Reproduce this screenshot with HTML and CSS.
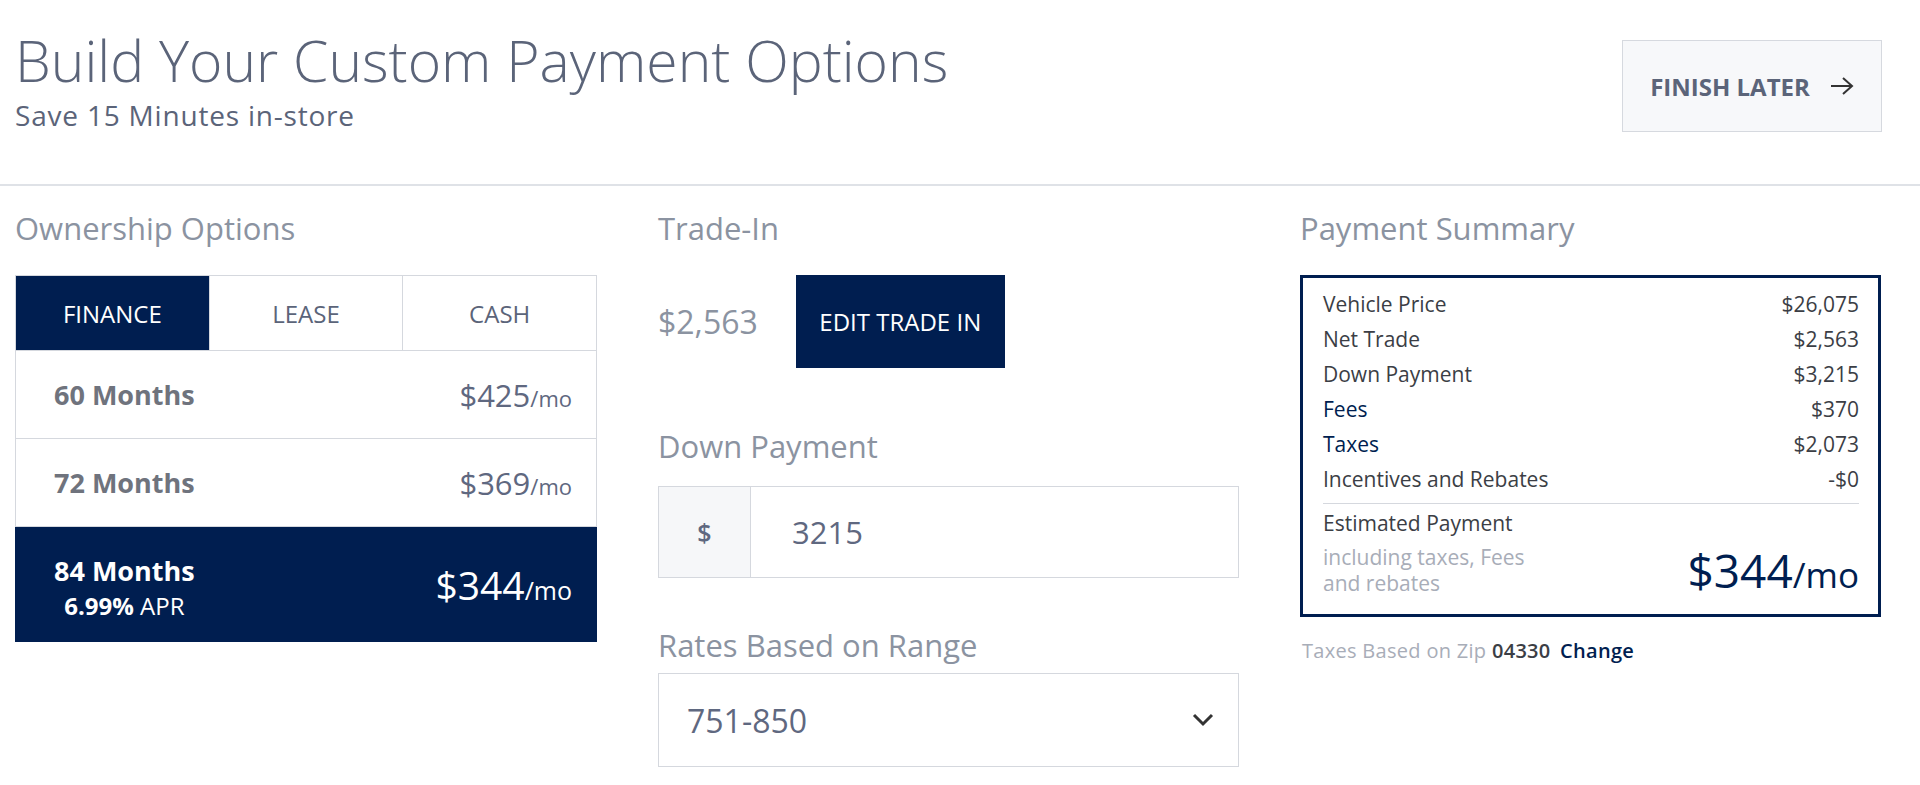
FILE: index.html
```html
<!DOCTYPE html>
<html lang="en">
<head>
<meta charset="utf-8">
<title>Build Your Custom Payment Options</title>
<link rel="stylesheet" href="styles.css">
</head>
<body>
<header class="header">
  <div class="header-text">
    <h1 class="title">Build Your Custom Payment Options</h1>
    <p class="subtitle">Save 15 Minutes in-store</p>
  </div>
  <button class="finish-btn">
    <span>FINISH LATER</span>
    <svg class="arrow" width="24" height="20" viewBox="0 0 24 20"><path d="M1 10 H22 M13 2 L22 10 L13 18" fill="none" stroke="#333" stroke-width="2"/></svg>
  </button>
</header>

<main class="main">
  <section class="col">
    <h2 class="heading">Ownership Options</h2>
    <div class="options">
      <div class="tabs">
        <div class="tab active">FINANCE</div>
        <div class="tab">LEASE</div>
        <div class="tab">CASH</div>
      </div>
      <div class="term">
        <span class="term-name">60 Months</span>
        <span class="term-price">$425<small>/mo</small></span>
      </div>
      <div class="term">
        <span class="term-name">72 Months</span>
        <span class="term-price">$369<small>/mo</small></span>
      </div>
      <div class="term selected">
        <span class="term-info">
          <span class="term-name">84 Months</span>
          <span class="apr"><b>6.99%</b> APR</span>
        </span>
        <span class="term-price">$344<small>/mo</small></span>
      </div>
    </div>
  </section>

  <section class="col">
    <h2 class="heading">Trade-In</h2>
    <div class="trade-row">
      <span class="trade-value">$2,563</span>
      <button class="edit-btn">EDIT TRADE IN</button>
    </div>
    <h2 class="heading down-heading">Down Payment</h2>
    <div class="field">
      <span class="prefix">$</span>
      <span class="field-value">3215</span>
    </div>
    <h2 class="heading rates-heading">Rates Based on Range</h2>
    <div class="select">
      <span class="select-value">751-850</span>
      <svg class="chevron" width="22" height="14" viewBox="0 0 22 14"><path d="M2 2 L11 11 L20 2" fill="none" stroke="#333" stroke-width="3"/></svg>
    </div>
  </section>

  <section class="col">
    <h2 class="heading">Payment Summary</h2>
    <div class="summary">
      <div class="line"><span>Vehicle Price</span><span>$26,075</span></div>
      <div class="line"><span>Net Trade</span><span>$2,563</span></div>
      <div class="line"><span>Down Payment</span><span>$3,215</span></div>
      <div class="line"><span class="link">Fees</span><span>$370</span></div>
      <div class="line"><span class="link">Taxes</span><span>$2,073</span></div>
      <div class="line"><span>Incentives and Rebates</span><span>-$0</span></div>
      <div class="divider"></div>
      <div class="est-label">Estimated Payment</div>
      <div class="est-row">
        <span class="est-note">including taxes, Fees<br>and rebates</span>
        <span class="est-price">$344<small>/mo</small></span>
      </div>
    </div>
    <p class="zip">Taxes Based on Zip <span class="zip-code">04330</span> <span class="zip-change">Change</span></p>
  </section>
</main>
</body>
</html>
```

FILE: styles.css
```css
* { box-sizing: border-box; }
body {
  margin: 0;
  font-family: "Open Sans", "Noto Sans", sans-serif;
  background: #fff;
  color: #5b6479;
}
.header {
  display: flex;
  justify-content: space-between;
  align-items: flex-start;
  height: 186px;
  padding: 0 38px 0 15px;
  border-bottom: 2px solid #dfe2e7;
}
.title {
  margin: 26px 0 0;
  font-size: 57px;
  line-height: 68px;
  font-weight: 300;
  color: #5b6479;
}
.subtitle {
  margin: 2px 0 0;
  font-size: 28px;
  line-height: 38px;
  letter-spacing: 0.8px;
  font-weight: 400;
  color: #5b6479;
}
.finish-btn {
  margin-top: 40px;
  width: 260px;
  height: 92px;
  display: flex;
  align-items: center;
  justify-content: center;
  gap: 20px;
  background: #f7f8fa;
  border: 1px solid #d6d9df;
  font-family: inherit;
  font-size: 24px;
  font-weight: 700;
  color: #5b6479;
  padding: 0;
}
.arrow { display: block; }

.main {
  display: grid;
  grid-template-columns: 582px 581px 581px;
  column-gap: 61px;
  padding: 22px 15px 0;
}
.heading {
  margin: 0;
  font-size: 31px;
  line-height: 40px;
  font-weight: 400;
  color: #8b93a1;
}

/* Ownership */
.options {
  margin-top: 27px;
  border: 1px solid #d5d8de;
}
.tabs {
  display: flex;
  height: 75px;
  border-bottom: 1px solid #d5d8de;
}
.tab {
  flex: 1;
  display: flex;
  align-items: center;
  justify-content: center;
  font-size: 24px;
  color: #5b6479;
  border-right: 1px solid #d5d8de;
}
.tab:last-child { border-right: none; }
.tab.active {
  background: #001e50;
  color: #fff;
}
.term {
  display: flex;
  justify-content: space-between;
  align-items: center;
  height: 88px;
  padding: 0 24px 0 38px;
  border-bottom: 1px solid #d5d8de;
}
.term-name {
  font-size: 27px;
  font-weight: 700;
  color: #6f737d;
}
.term-price {
  font-size: 31px;
  color: #5f6880;
}
.term-price small {
  font-size: 22px;
}
.term.selected {
  height: 115px;
  border-bottom: none;
  background: #001e50;
  margin: 0 -1px -1px;
  padding: 0 25px 0 39px;
}
.term.selected .term-name { color: #fff; line-height: 37px; }
.term-info {
  display: flex;
  flex-direction: column;
  align-items: center;
  margin-top: 4px;
}
.apr {
  font-size: 24px;
  line-height: 33px;
  color: #fff;
}
.term.selected .term-price {
  font-size: 39px;
  color: #fff;
}
.term.selected .term-price small { font-size: 25px; }

/* Trade in */
.trade-row {
  margin-top: 27px;
  display: flex;
  align-items: center;
  gap: 38px;
}
.trade-value {
  font-size: 32px;
  color: #8b93a1;
}
.edit-btn {
  width: 209px;
  height: 93px;
  border: none;
  background: #001e50;
  color: #fff;
  font-family: inherit;
  font-size: 24px;
  padding: 0;
}
.down-heading { margin-top: 58px; }
.field {
  margin-top: 20px;
  height: 92px;
  display: flex;
  border: 1px solid #d5d8de;
}
.prefix {
  width: 92px;
  display: flex;
  align-items: center;
  justify-content: center;
  background: #f6f7f9;
  border-right: 1px solid #d5d8de;
  font-size: 25px;
  font-weight: 600;
  color: #5f6880;
}
.field-value {
  display: flex;
  align-items: center;
  padding-left: 41px;
  font-size: 31px;
  color: #5f6880;
}
.rates-heading { margin-top: 47px; }
.select {
  margin-top: 8px;
  height: 94px;
  display: flex;
  align-items: center;
  justify-content: space-between;
  padding: 0 24px 0 28px;
  border: 1px solid #d5d8de;
}
.select-value {
  font-size: 32px;
  color: #5f6880;
}
.chevron { display: block; }

/* Summary */
.summary {
  margin-top: 27px;
  border: 3px solid #001e50;
  padding: 9px 19px 18px 20px;
  color: #3b3e45;
}
.line {
  display: flex;
  justify-content: space-between;
  font-size: 21px;
  line-height: 35px;
}
.link { color: #001e50; }
.divider {
  margin-top: 6px;
  height: 1px;
  background: #d5d8de;
}
.est-label {
  margin-top: 4px;
  font-size: 21px;
  line-height: 30px;
}
.est-row {
  margin-top: 6px;
  display: flex;
  justify-content: space-between;
  align-items: flex-end;
}
.est-note {
  font-size: 21px;
  line-height: 26px;
  color: #a8adb8;
}
.est-price {
  font-size: 46px;
  line-height: 50px;
  color: #001e50;
  margin-bottom: -4px;
}
.est-price small { font-size: 35px; }
.zip {
  margin: 22px 0 0 2px;
  font-size: 20px;
  line-height: 24px;
  letter-spacing: 0.3px;
  color: #a8adb8;
}
.zip-code { color: #3b3e45; font-weight: 600; }
.zip-change { color: #001e50; margin-left: 4px; font-weight: 600; }
```
